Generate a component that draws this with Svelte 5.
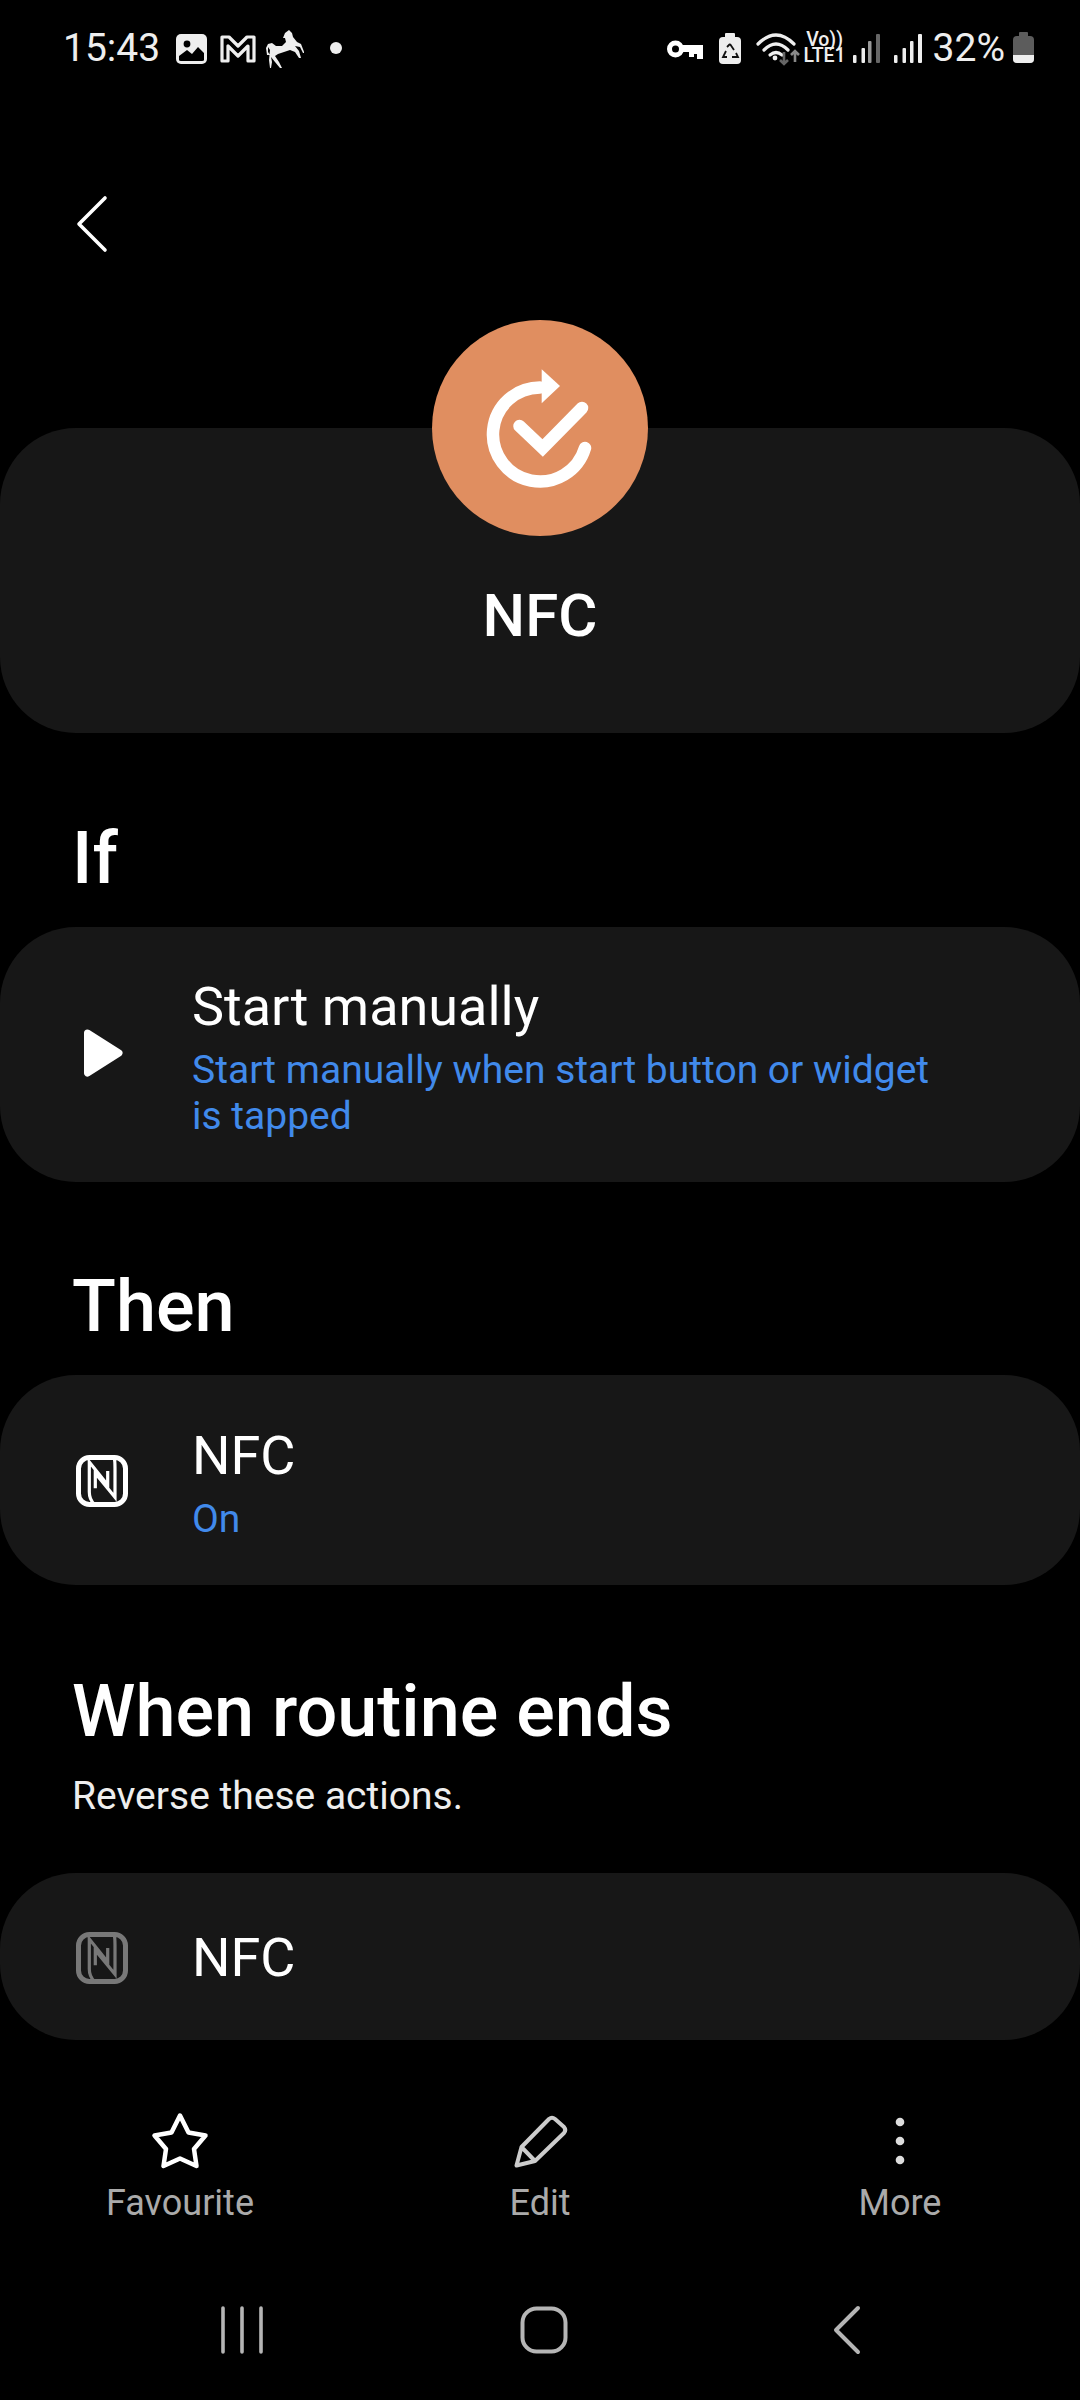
<script>
  const nfcPath = "M94 1504 Q89.3 1499 89.3 1492 V1462 L107.700 1485 V1471 M114 1457 Q115 1460 115 1468 V1497.300 L95.300 1473.300 V1488.300";
</script>

<div class="page">
  <header class="status">
    <div class="left">
      <span class="time">15:43</span>
      <svg class="notif" width="130" height="44" viewBox="174 26 130 44">
        <rect x="176" y="34" width="31" height="30" rx="5" fill="#eee"/>
        <circle cx="187" cy="44" r="3.4" fill="#000"/>
        <path d="M179 60 L179 56 L187 50 L192 54 L198 47 L204 53 L204 60 Q204 61 202 61 L181 61 Q179 61 179 60Z" fill="#000"/>
        <path d="M222 61 V37 H229 L238 46 L247 37 H254 V61 H248 V46 L238 56 L228 46 V61 Z" fill="none" stroke="#eee" stroke-width="3.2" stroke-linejoin="round"/>
        <path d="M289 30 L292 33 L293 37 L297 42 L301 44 L304.500 53 L303 53 L300 47 L295 46 L299 51 L301 58 L299 58 L295 52 L290 50 L284 52 L278 54 L275 56 L279 62 L282 68 L280 68 L275 62 L271 57 L272 62 L271 68 L270 68 L269 60 L270 50 L268 47 L268 52 L270 55 L267 55 L266 48 L268 44 L272 43 L276 46 L282 46 L286 42 L285 38 L283 38 L285 33 Z" fill="#eee"/>
      </svg>
      <span class="dot"></span>
    </div>
    <div class="right">
      <svg class="sys" width="138" height="44" viewBox="664 26 138 44">
        <circle cx="674.500" cy="49" r="6" fill="none" stroke="#fff" stroke-width="5"/>
        <path d="M681 45 H702 V59 H696 V54 H693 V57 H688 V52 H681 Z" fill="#fff"/>
        <rect x="718" y="37" width="22" height="27" rx="4" fill="#eee"/>
        <rect x="724" y="33" width="10" height="5" rx="1" fill="#eee"/>
        <path d="M729 44 L733 50 M735 53 L737 57 H731 M726 57 H722 L725 51 M726 47 L729 44" fill="none" stroke="#111" stroke-width="1.8"/>
        <path d="M757 44 Q775 26 793 44" fill="none" stroke="#eee" stroke-width="3.2" stroke-linecap="round"/>
        <path d="M763 50 Q775 38 787 50" fill="none" stroke="#eee" stroke-width="3.2" stroke-linecap="round"/>
        <path d="M769 55 Q775 50 781 55" fill="none" stroke="#eee" stroke-width="3.2" stroke-linecap="round"/>
        <circle cx="774" cy="58" r="2.400" fill="#eee"/>
        <path d="M783 52 V64 M779 60 L783 64 L787 60" fill="none" stroke="#666" stroke-width="2.600"/>
        <path d="M794 62 V51 M790 55 L794 51 L798 55" fill="none" stroke="#888" stroke-width="2.600"/>
      </svg>
      <span class="volte"><b>Vo))</b><b>LTE1</b></span>
      <svg class="bars" width="75" height="36" viewBox="850 30 75 36">
        <rect x="852" y="55" width="3.500" height="8" rx="1" fill="#eee"/>
        <rect x="860.500" y="48" width="3.500" height="15" rx="1" fill="#eee"/>
        <rect x="867" y="41" width="3.500" height="22" rx="1" fill="#999"/>
        <rect x="875" y="34" width="4" height="29" rx="1" fill="#666"/>
        <rect x="893" y="55" width="3.500" height="8" rx="1" fill="#eee"/>
        <rect x="901.500" y="48" width="3.500" height="15" rx="1" fill="#eee"/>
        <rect x="909" y="41" width="3.500" height="22" rx="1" fill="#eee"/>
        <rect x="917" y="34" width="4" height="29" rx="1" fill="#eee"/>
      </svg>
      <span class="pct">32%</span>
      <svg class="batt" width="24" height="34" viewBox="1012 32 24 34">
        <rect x="1013" y="37" width="21" height="27" rx="4" fill="#5c5c5c"/>
        <rect x="1019" y="33" width="9" height="5" rx="1" fill="#5c5c5c"/>
        <path d="M1013 56 H1034 V60 Q1034 64 1030 64 H1017 Q1013 64 1013 60Z" fill="#eee"/>
      </svg>
    </div>
  </header>

  <div class="backrow">
    <svg width="36" height="60" viewBox="74 193 36 60"><path d="M105 198 L79 224 L105 250" fill="none" stroke="#fff" stroke-width="3.600" stroke-linecap="round" stroke-linejoin="round"/></svg>
  </div>

  <section class="hero">
    <div class="badge">
      <svg width="216" height="216" viewBox="432 320 216 216">
        <path d="M585 448 A47 47 0 1 1 540 387.500" fill="none" stroke="#fff" stroke-width="12.500" stroke-linecap="round"/>
        <path d="M541.700 369.300 L560 386 L541.700 403.300 Z" fill="#fff"/>
        <path d="M519.500 426 L542.700 448 L582 408" fill="none" stroke="#fff" stroke-width="12.500" stroke-linecap="round"/>
      </svg>
    </div>
    <h1>NFC</h1>
  </section>

  <h2 class="if">If</h2>
  <section class="card tall">
    <span class="ic">
      <svg width="72" height="72" viewBox="66 1018 72 72"><path d="M87.500 1032 L119 1052 L87.500 1072 Z" fill="#fff" stroke="#fff" stroke-width="7" stroke-linejoin="round"/></svg>
    </span>
    <div class="txt">
      <div class="title">Start manually</div>
      <div class="sub">Start manually when start button or widget is tapped</div>
    </div>
  </section>

  <h2 class="then">Then</h2>
  <section class="card mid">
    <span class="ic">
      <svg width="72" height="72" viewBox="66 1444 72 72">
        <rect x="78.500" y="1457.500" width="47" height="47" rx="11" fill="none" stroke="#fff" stroke-width="5"/>
        <path d={nfcPath} fill="none" stroke="#fff" stroke-width="3.200"/>
      </svg>
    </span>
    <div class="txt">
      <div class="title">NFC</div>
      <div class="sub">On</div>
    </div>
  </section>

  <h2 class="ends">When routine ends</h2>
  <p class="desc">Reverse these actions.</p>
  <section class="card short">
    <span class="ic dim">
      <svg width="72" height="72" viewBox="66 1444 72 72">
        <rect x="78.500" y="1457.500" width="47" height="47" rx="11" fill="none" stroke="#fff" stroke-width="5"/>
        <path d={nfcPath} fill="none" stroke="#fff" stroke-width="3.200"/>
      </svg>
    </span>
    <div class="title solo">NFC</div>
  </section>

  <nav class="actions">
    <div class="act">
      <svg width="60" height="60" viewBox="150 2110 60 60"><path d="M180 2115.500 L188.500 2132.500 L205.500 2135.500 L194 2149 L196.500 2166 L180 2158.500 L163.500 2166 L166 2149 L154.500 2135.500 L171.500 2132.500 Z" fill="none" stroke="#fff" stroke-width="4.500" stroke-linejoin="round"/></svg>
      <span>Favourite</span>
    </div>
    <div class="act">
      <svg width="60" height="60" viewBox="510 2110 60 60"><path d="M516.500 2165.500 L521.500 2147 L549 2119 Q552 2116.500 555 2119 L564 2127 Q566.500 2130 564 2133 L535 2161 Z M521.500 2147 L535 2161" fill="none" stroke="#ccc" stroke-width="4" stroke-linejoin="round"/></svg>
      <span>Edit</span>
    </div>
    <div class="act">
      <svg width="60" height="60" viewBox="870 2110 60 60"><circle cx="900" cy="2122" r="4.300" fill="#ddd"/><circle cx="900" cy="2141" r="4.300" fill="#ddd"/><circle cx="900" cy="2160" r="4.300" fill="#ddd"/></svg>
      <span>More</span>
    </div>
  </nav>

  <nav class="sysnav">
    <svg class="n1" width="48" height="52" viewBox="218 2304 48 52"><path d="M223 2308 V2352 M242 2308 V2352 M261 2308 V2352" fill="none" stroke="#b5b5b5" stroke-width="3.600" stroke-linecap="round"/></svg>
    <svg class="n2" width="52" height="52" viewBox="518 2304 52 52"><rect x="522.500" y="2308.500" width="43" height="43" rx="14" fill="none" stroke="#b5b5b5" stroke-width="4"/></svg>
    <svg class="n3" width="36" height="52" viewBox="830 2304 36 52"><path d="M858 2308 L836 2330 L858 2352" fill="none" stroke="#b5b5b5" stroke-width="4" stroke-linecap="round" stroke-linejoin="round"/></svg>
  </nav>
</div>

<style>
  :global(body) { margin: 0; background: #000; }
  .page { width: 1080px; height: 2400px; background: #000; color: #fff; font-family: Roboto, "Noto Sans", sans-serif; overflow: hidden; }
  .status { height: 96px; padding: 0 44px 0 63px; display: flex; justify-content: space-between; align-items: center; box-sizing: border-box; }
  .left, .right { display: flex; align-items: center; }
  .time { font-size: 39px; color: #eee; margin-right: 14px; }
  .notif, .sys, .bars, .batt { display: block; }
  .dot { width: 12px; height: 12px; border-radius: 50%; background: #eee; margin-left: 26px; }
  .volte { display: flex; flex-direction: column; align-items: center; line-height: 16.5px; font-size: 19.5px; color: #eee; width: 44px; }
  .volte b { font-weight: 500; }
  .bars { margin-left: 4px; }
  .pct { font-size: 39px; color: #eee; margin: 0 7px; }
  .backrow { height: 212px; padding: 97px 0 0 74px; box-sizing: border-box; }
  .hero { margin-top: 120px; height: 305px; background: #171717; border-radius: 76px; display: flex; flex-direction: column; align-items: center; }
  .badge { width: 216px; height: 216px; border-radius: 50%; background: #e08e60; margin-top: -108px; }
  .badge svg { display: block; }
  h1 { font-size: 60px; font-weight: 500; margin: 46px 0 0; line-height: 68px; }
  h2 { font-size: 72px; font-weight: 500; margin: 0; padding-left: 72px; line-height: 80px; }
  .if { margin-top: 86px; }
  .then { margin-top: 85px; }
  .ends { margin-top: 87px; }
  .desc { font-size: 39px; margin: 21px 0 0 72px; color: #eee; line-height: 46px; }
  .card { background: #171717; border-radius: 76px; display: flex; align-items: center; padding-left: 66px; padding-right: 130px; }
  .tall { height: 255px; margin-top: 28px; }
  .mid { height: 210px; margin-top: 28px; }
  .short { height: 167px; margin-top: 54px; }
  .ic { width: 72px; height: 72px; flex: none; margin-right: 54px; }
  .ic svg { display: block; }
  .dim { opacity: 0.42; }
  .txt { padding-top: 6px; }
  .title { font-size: 54px; line-height: 62px; }
  .solo { padding-top: 3px; }
  .sub { font-size: 39px; line-height: 46px; color: #418aeb; margin-top: 9px; }
  .actions { margin-top: 70px; display: grid; grid-template-columns: repeat(3, 360px); }
  .act { display: flex; flex-direction: column; align-items: center; }
  .act svg { display: block; }
  .act span { font-size: 36px; color: #aaa; line-height: 44px; margin-top: 11px; }
  .sysnav { margin-top: 79px; display: flex; padding-left: 218px; }
  .sysnav svg { display: block; }
  .n2 { margin-left: 252px; }
  .n3 { margin-left: 260px; }
</style>
